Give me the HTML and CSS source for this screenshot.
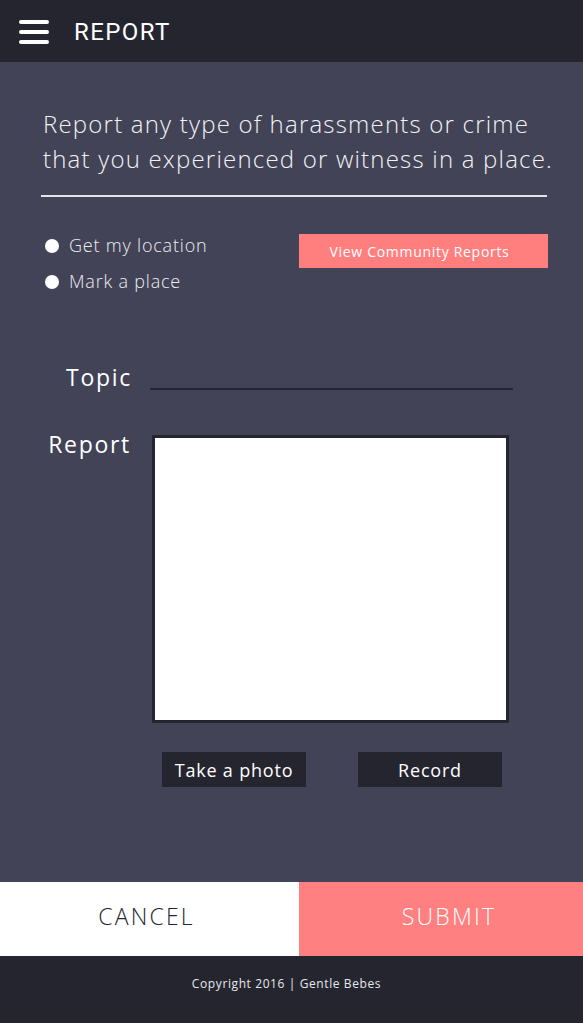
FILE: index.html
```html
<!DOCTYPE html>
<html>
<head>
<meta charset="utf-8">
<link rel="stylesheet" href="styles.css">
</head>
<body>
<header class="topbar">
  <svg class="menu" width="30" height="26" viewBox="0 0 30 26">
    <path d="M2 3H28M2 13H28M2 23H28" stroke="#fff" stroke-width="4" stroke-linecap="round"/>
  </svg>
  <span class="title">REPORT</span>
</header>
<main class="main">
  <p class="intro">Report any type of harassments or crime that you experienced or witness in a place.</p>
  <div class="divider"></div>
  <div class="options">
    <div class="radios">
      <label class="radio"><span class="dot"></span>Get my location</label>
      <label class="radio"><span class="dot"></span>Mark a place</label>
    </div>
    <button class="community">View Community Reports</button>
  </div>
  <div class="field topic-field">
    <span class="label topic-label">Topic</span>
    <div class="topic-line"></div>
  </div>
  <div class="field report-field">
    <span class="label report-label">Report</span>
    <div class="report-box"></div>
  </div>
  <div class="media">
    <button class="dark-btn">Take a photo</button>
    <button class="dark-btn">Record</button>
  </div>
</main>
<div class="actions">
  <button class="cancel">CANCEL</button>
  <button class="submit">SUBMIT</button>
</div>
<footer class="footer">Copyright 2016 | Gentle Bebes</footer>
</body>
</html>
```
FILE: styles.css
```css
* { box-sizing: border-box; }
html, body { margin: 0; padding: 0; }
body {
  width: 583px;
  font-family: "Open Sans", "Liberation Sans", sans-serif;
  background: #424357;
  color: #fff;
}
button { font-family: inherit; border: 0; cursor: pointer; padding: 0; }

.topbar {
  height: 62px;
  background: #25252f;
  display: flex;
  align-items: center;
  padding-left: 19px;
}
.menu { display: block; margin-top: 1px; }
.title {
  font-family: Roboto, "Liberation Sans", sans-serif;
  font-size: 24px;
  letter-spacing: 1.4px;
  margin-left: 25px;
  margin-top: 1px;
}

.main {
  height: 820px;
  padding: 44px 22px 0 41px;
}
.intro {
  margin: 0;
  padding-left: 2px;
  font-weight: 300;
  font-size: 24px;
  line-height: 35px;
  letter-spacing: 1.2px;
  color: #f2f2f4;
}
.divider {
  height: 2px;
  background: #e4e4e8;
  margin-top: 19px;
  width: 506px;
}
.options {
  display: flex;
  justify-content: space-between;
  margin-top: 37px;
  width: 507px;
}
.radios {
  display: flex;
  flex-direction: column;
  gap: 11px;
  padding-left: 4px;
  margin-top: -1px;
}
.radio {
  display: flex;
  align-items: center;
  font-size: 18px;
  font-weight: 300;
  letter-spacing: 0.8px;
  line-height: 25px;
  color: #eeeef2;
}
.dot {
  width: 14px;
  height: 14px;
  border-radius: 50%;
  background: #fff;
  margin-right: 10px;
}
.community {
  width: 249px;
  height: 34px;
  background: #ff7f7f;
  color: #fff;
  font-size: 14px;
  letter-spacing: 0.7px;
  padding-right: 8px;
}

.field { display: flex; }
.label {
  font-size: 23px;
  letter-spacing: 1.7px;
  color: #fff;
  text-align: right;
}
.topic-field {
  margin-top: 68px;
  align-items: flex-end;
}
.topic-label {
  width: 91px;
  line-height: 30px;
}
.topic-line {
  height: 2px;
  width: 363px;
  background: #25252f;
  margin-left: 18px;
  margin-bottom: 2px;
}

.report-field { margin-top: 43px; }
.report-label {
  width: 90px;
  line-height: 32px;
  margin-top: -7px;
}
.report-box {
  width: 357px;
  height: 288px;
  background: #fff;
  border: 3px solid #25252f;
  margin-left: 21px;
}
.media {
  display: flex;
  gap: 52px;
  margin-top: 29px;
  padding-left: 121px;
}
.dark-btn {
  width: 144px;
  height: 35px;
  background: #25252f;
  color: #fff;
  font-size: 18px;
  letter-spacing: 0.8px;
}

.actions {
  display: flex;
  height: 74px;
}
.cancel, .submit {
  font-size: 23px;
  letter-spacing: 2.2px;
  font-weight: 300;
  padding-bottom: 6px;
}
.cancel {
  width: 299px;
  background: #fff;
  color: #25252f;
  padding-right: 6px;
}
.submit {
  flex: 1;
  background: #ff8080;
  color: #fff;
  padding-left: 16px;
}
.footer {
  height: 67px;
  background: #25252f;
  text-align: center;
  font-size: 12px;
  letter-spacing: 0.6px;
  padding-top: 19px;
  padding-right: 10px;
  color: #e8e8ec;
}
```
